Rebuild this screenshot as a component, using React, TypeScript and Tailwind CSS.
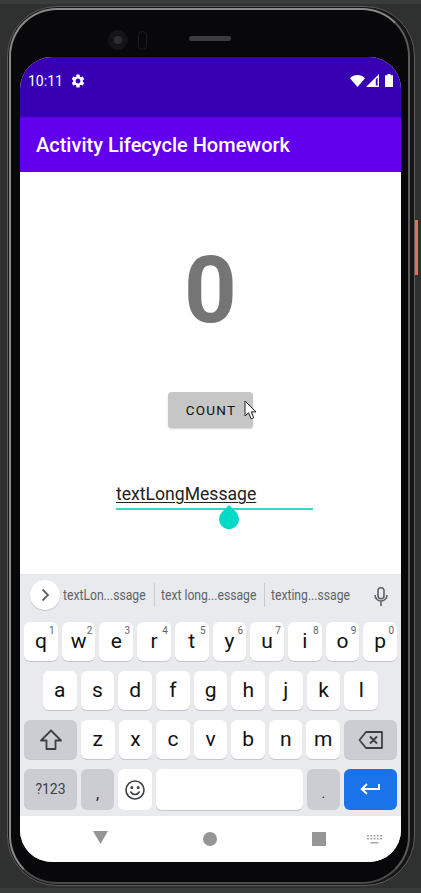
const row1 = [
  ['q', '1'], ['w', '2'], ['e', '3'], ['r', '4'], ['t', '5'],
  ['y', '6'], ['u', '7'], ['i', '8'], ['o', '9'], ['p', '0'],
]
const row2 = ['a', 's', 'd', 'f', 'g', 'h', 'j', 'k', 'l']
const row3 = ['z', 'x', 'c', 'v', 'b', 'n', 'm']

function Key({ label, hint }: { label: string; hint?: string }) {
  return (
    <div className="relative flex-1 h-full bg-white rounded-[6px] shadow-[0_1px_0_#c4c6ca] flex items-center justify-center text-[21px] text-[#111] leading-none">
      {label}
      {hint && <span className="absolute top-[3px] right-[3px] text-[10px] leading-[12px] text-[#5f6368]">{hint}</span>}
    </div>
  )
}

export default function App() {
  return (
    <div className="relative w-[421px] h-[893px] overflow-hidden bg-[#2f3030] border-t-[4px] border-b-[5px] border-[#3a3b3b] pt-[2px] font-['Roboto',sans-serif]">
      {/* power button */}
      <div className="absolute left-[415px] top-[216px] w-[3px] h-[55px] bg-[#d9735a]" />

      <div className="ml-[7px] w-[408px] h-[880px] rounded-[50px] bg-[#161617] border border-[#5c5c5c] pl-[1px] pt-[1px] pr-[4px] pb-[1px]">
        <div className="h-full rounded-[48px] border-2 border-t-[#8a8a8a] border-l-[#8a8a8a] border-r-[#5a5a5a] border-b-[#4a4a4a] bg-[#08080a]">
          {/* top bezel */}
          <div className="h-[47px] flex items-center pl-[97px] pt-[13px]">
            <div className="w-[20px] h-[20px] rounded-full bg-[#151518] flex items-center justify-center">
              <div className="w-[8px] h-[8px] rounded-full bg-[#2a3038]" />
            </div>
            <div className="ml-[10px] w-[9px] h-[19px] rounded-full border border-[#1c1c1f]" />
            <div className="ml-[42px] mb-[4px] w-[42px] h-[5px] rounded-full bg-[#3c3c3e]" />
          </div>

          {/* screen */}
          <div className="ml-[9px] w-[381px] h-[805px] rounded-[32px] overflow-hidden bg-white flex flex-col">
            {/* status bar */}
            <div className="h-[60px] bg-[#3700b3] flex items-start pt-[14px] pl-[8px] pr-[8px] text-white">
              <span className="text-[14px] leading-[20px] w-[42px]">10:11</span>
              <svg className="w-[16px] h-[16px] mt-[2px]" viewBox="0 0 24 24" fill="currentColor">
                <path d="M19.14 12.94c.04-.3.06-.61.06-.94 0-.32-.02-.64-.07-.94l2.03-1.58a.49.49 0 0 0 .12-.61l-1.92-3.32a.488.488 0 0 0-.59-.22l-2.39.96c-.5-.38-1.03-.7-1.62-.94l-.36-2.54a.484.484 0 0 0-.48-.41h-3.84c-.24 0-.43.17-.47.41l-.36 2.54c-.59.24-1.13.57-1.62.94l-2.39-.96c-.22-.08-.47 0-.59.22L2.74 8.87c-.12.21-.08.47.12.61l2.03 1.58c-.05.3-.09.63-.09.94s.02.64.07.94l-2.03 1.58a.49.49 0 0 0-.12.61l1.92 3.32c.12.22.37.29.59.22l2.39-.96c.5.38 1.03.7 1.62.94l.36 2.54c.05.24.24.41.48.41h3.84c.24 0 .44-.17.47-.41l.36-2.54c.59-.24 1.13-.56 1.62-.94l2.39.96c.22.08.47 0 .59-.22l1.92-3.32c.12-.22.07-.47-.12-.61l-2.01-1.58zM12 15.6c-1.98 0-3.6-1.62-3.6-3.6s1.62-3.6 3.6-3.6 3.6 1.62 3.6 3.6-1.62 3.6-3.6 3.6z" />
              </svg>
              <div className="ml-auto flex items-start mt-[3px]">
                <svg className="w-[15px] h-[12px] mt-[1px]" viewBox="0 0 15 12" fill="currentColor">
                  <path d="M0 3.2C2 1.2 4.6 0 7.5 0S13 1.2 15 3.2L7.5 12z" />
                </svg>
                <svg className="ml-[1px] w-[13px] h-[13px]" viewBox="0 0 13 13" fill="currentColor">
                  <path d="M13 0v13H0zM11.6 3.4 9.8 5.2v6.4h1.8z" fillRule="evenodd" />
                </svg>
                <svg className="ml-[6px] w-[8px] h-[13px]" viewBox="0 0 8 13" fill="currentColor">
                  <path d="M2.4 0h3.2v1.2H8V13H0V1.2h2.4z" />
                </svg>
              </div>
            </div>

            {/* app bar */}
            <div className="h-[55px] bg-[#6200ee] flex items-center pl-[16px] pt-[1px] text-white text-[20px] leading-[24px] font-medium">
              Activity Lifecycle Homework
            </div>

            {/* content */}
            <div className="relative h-[402px] bg-white flex flex-col">
              <div className="mt-[64px] text-center text-[92px] leading-[110px] font-bold text-[#757575]">0</div>
              <div className="mt-[46px] mx-auto w-[85px] h-[36px] rounded-[4px] bg-[#c5c6c5] shadow-[0_1px_2px_#d0d0d0] flex items-center justify-center pl-[1px] text-[13.5px] tracking-[1.25px] text-[#111]">
                COUNT
              </div>
              <div className="mt-[54px] ml-[96px] w-[197px] h-[28px] border-b-2 border-[#2fdcc9] text-[17.6px] leading-[25px] text-[#222]">
                <span className="underline underline-offset-[2px] decoration-[1px]">textLongMessage</span>
              </div>
              {/* text handle */}
              <svg className="absolute left-[199px] top-[333px] w-[20px] h-[24px]" viewBox="0 0 20 24" fill="#03dac5">
                <path d="M10 0 L17 7 A10 10 0 1 1 3 7z" />
              </svg>
              {/* mouse pointer */}
              <svg className="absolute left-[224px] top-[228px] w-[14px] h-[20px]" viewBox="0 0 14 20">
                <path d="M1 1v15l3.6-3.2 2.5 6 2.6-1.1-2.5-5.8H12z" fill="#fff" stroke="#222" strokeWidth="1" />
              </svg>
            </div>

            {/* keyboard */}
            <div className="h-[242px] bg-[#e8eaed] flex flex-col">
              {/* suggestions */}
              <div className="h-[48px] flex items-center pl-[10px] text-[#5f6368]">
                <div className="w-[30px] h-[30px] mb-[6px] rounded-full bg-white shadow-[0_1px_1px_#c4c6ca] flex items-center justify-center">
                  <svg className="w-[14px] h-[14px]" viewBox="0 0 14 14" fill="none" stroke="#5f6368" strokeWidth="1.8">
                    <path d="M4.500 1.500 10 7l-5.500 5.500" />
                  </svg>
                </div>
                <div className="mb-[6px] flex items-center text-[15px] leading-[20px] h-[24px]">
                  <span className="ml-[3px] w-[91px] whitespace-nowrap">
                    <span className="inline-block origin-left scale-x-[0.81]">textLon...ssage</span>
                  </span>
                  <span className="w-px h-[24px] bg-[#c9cbcf]" />
                  <span className="ml-[6px] w-[103px] whitespace-nowrap">
                    <span className="inline-block origin-left scale-x-[0.81]">text long...essage</span>
                  </span>
                  <span className="w-px h-[24px] bg-[#c9cbcf]" />
                  <span className="ml-[6px] w-[96px] whitespace-nowrap">
                    <span className="inline-block origin-left scale-x-[0.81]">texting...ssage</span>
                  </span>
                </div>
                <svg className="ml-[7px] mb-[4px] w-[14px] h-[19px]" viewBox="0 0 14 19" fill="none" stroke="#5f6368" strokeWidth="1.6">
                  <rect x="4" y="0.8" width="6" height="11" rx="3" />
                  <path d="M1 8a6 6 0 0 0 12 0M7 14v5" />
                </svg>
              </div>

              {/* keys */}
              <div className="flex flex-col gap-[10px] px-[4px]">
                <div className="h-[39px] flex gap-[4px]">
                  {row1.map(([k, h]) => <Key key={k} label={k} hint={h} />)}
                </div>
                <div className="h-[39px] flex gap-[4px] px-[19px]">
                  {row2.map((k) => <Key key={k} label={k} />)}
                </div>
                <div className="h-[39px] flex gap-[4px]">
                  <div className="w-[53px] h-full rounded-[6px] bg-[#cbcdd3] shadow-[0_1px_0_#c4c6ca] flex items-center justify-center">
                    <svg className="w-[24px] h-[22px]" viewBox="0 0 24 22" fill="none" stroke="#3c4043" strokeWidth="1.8" strokeLinejoin="round">
                      <path d="M12 1.500 2 11.500h5.500v8.500h9v-8.500H22z" />
                    </svg>
                  </div>
                  {row3.map((k) => <Key key={k} label={k} />)}
                  <div className="w-[53px] h-full rounded-[6px] bg-[#cbcdd3] shadow-[0_1px_0_#c4c6ca] flex items-center justify-center">
                    <svg className="w-[26px] h-[20px]" viewBox="0 0 26 20" fill="none" stroke="#3c4043" strokeWidth="1.8" strokeLinejoin="round">
                      <path d="M8 2h16v16H8l-6.500-8zM12 6.500l7 7M19 6.500l-7 7" />
                    </svg>
                  </div>
                </div>
                <div className="h-[41px] flex gap-[4px]">
                  <div className="w-[53px] h-full rounded-[6px] bg-[#cbcdd3] flex items-center justify-center text-[14px] text-[#3c4043]">?123</div>
                  <div className="flex-1 h-full rounded-[6px] bg-[#cbcdd3] flex items-center justify-center pt-[8px] text-[16px] text-[#222]">,</div>
                  <div className="flex-1 h-full rounded-[6px] bg-white flex items-center justify-center">
                    <svg className="w-[20px] h-[20px]" viewBox="0 0 20 20" fill="none" stroke="#3c4043" strokeWidth="1.6" strokeLinecap="round">
                      <circle cx="10" cy="10" r="9" />
                      <path d="M5.800 12a4.800 4.800 0 0 0 8.400 0" />
                      <circle cx="6.800" cy="7.400" r="0.7" fill="#3c4043" />
                      <circle cx="13.200" cy="7.400" r="0.7" fill="#3c4043" />
                    </svg>
                  </div>
                  <div className="w-[147px] h-full rounded-[6px] bg-white shadow-[0_1px_0_#c4c6ca]" />
                  <div className="flex-1 h-full rounded-[6px] bg-[#cbcdd3] flex items-center justify-center pt-[8px] text-[14px] text-[#222]">.</div>
                  <div className="w-[53px] h-full rounded-[6px] bg-[#1a73e8] flex items-center justify-center">
                    <svg className="w-[20px] h-[14px]" viewBox="0 0 20 14" fill="none" stroke="#fff" strokeWidth="2">
                      <path d="M19 1v5H2M7 1 1.800 6 7 11" />
                    </svg>
                  </div>
                </div>
              </div>
            </div>

            {/* nav bar */}
            <div className="flex-1 bg-white relative flex items-center pb-[1px]">
              <svg className="ml-[73px] w-[15px] h-[13px] mb-[2px]" viewBox="0 0 15 13" fill="#969696">
                <path d="M0 0h15L7.500 13z" />
              </svg>
              <div className="ml-[95px] w-[14px] h-[14px] rounded-full bg-[#969696]" />
              <div className="ml-[95px] w-[14px] h-[14px] bg-[#969696]" />
              <svg className="ml-[41px] mt-[2px] w-[15px] h-[9px]" viewBox="0 0 15 9" fill="#a8a8a8">
                <path d="M0 0h2v1.500H0zM3.200 0h2v1.500h-2zM6.500 0h2v1.500h-2zM9.800 0h2v1.500h-2zM13 0h2v1.500h-2zM0 3h2v1.500H0zM3.200 3h2v1.500h-2zM6.500 3h2v1.500h-2zM9.800 3h2v1.500h-2zM13 3h2v1.500h-2zM3.500 7h8v1.500h-8z" />
              </svg>
            </div>
          </div>
        </div>
      </div>
    </div>
  )
}
